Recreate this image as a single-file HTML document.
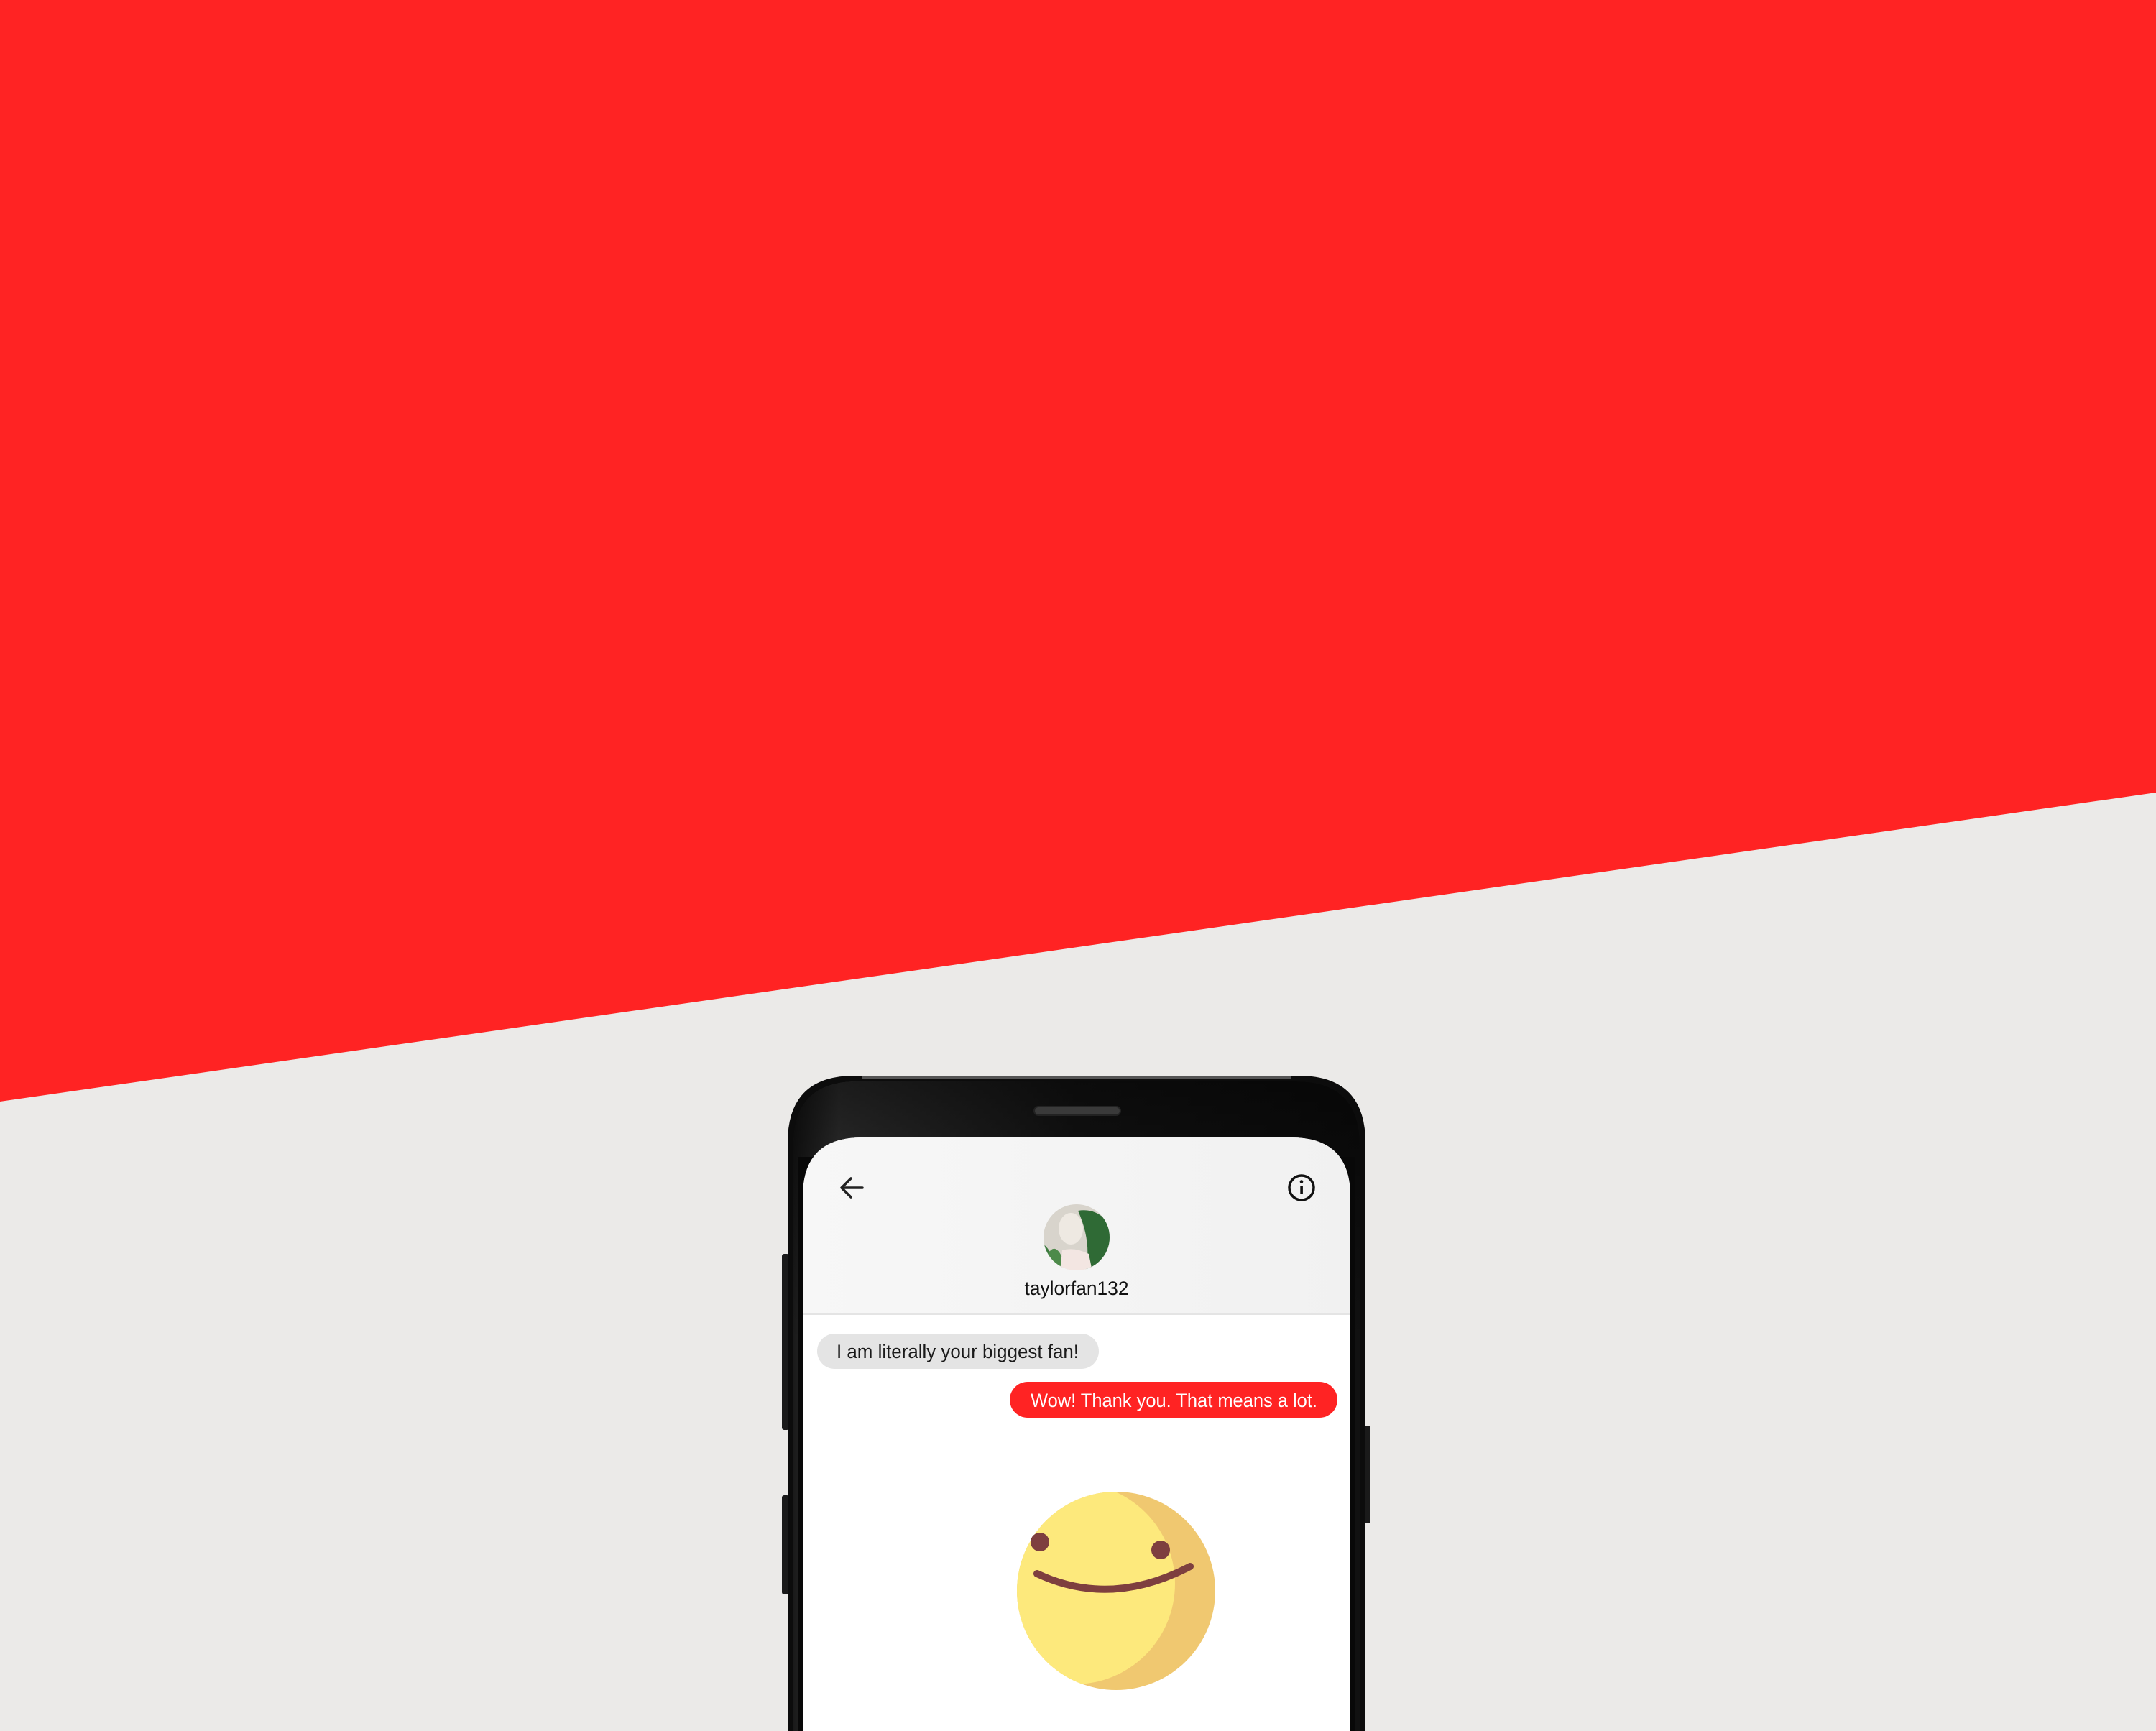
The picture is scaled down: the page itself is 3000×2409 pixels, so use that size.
<!DOCTYPE html>
<html><head><meta charset="utf-8"><style>
html,body{margin:0;padding:0;width:3000px;height:2409px;overflow:hidden;background:#ebeae8}
svg{display:block}
text{font-family:"Liberation Sans",sans-serif}
</style></head><body>
<svg width="3000" height="2409" viewBox="0 0 3000 2409" xmlns="http://www.w3.org/2000/svg">
<defs>
<linearGradient id="bez" x1="0" y1="0" x2="1" y2="0">
<stop offset="0" stop-color="#1a1a1a"/><stop offset="0.08" stop-color="#444"/><stop offset="0.5" stop-color="#1c1c1c"/><stop offset="1" stop-color="#111"/>
</linearGradient>
<linearGradient id="bezv" x1="0" y1="0" x2="0" y2="1">
<stop offset="0" stop-color="#000" stop-opacity="0.6"/><stop offset="0.4" stop-color="#000" stop-opacity="0"/>
</linearGradient>
<linearGradient id="hdr" x1="0" y1="0" x2="1" y2="0">
<stop offset="0" stop-color="#f7f7f7"/><stop offset="1" stop-color="#f1f1f1"/>
</linearGradient>
<clipPath id="face"><circle cx="1553" cy="2214" r="138"/></clipPath>
<clipPath id="av"><circle cx="1498" cy="1722" r="46"/></clipPath>
<clipPath id="scr"><path d="M1117 2409 V1665 Q1117 1583 1199 1583 H1797 Q1879 1583 1879 1665 V2409 Z"/></clipPath>
</defs>
<rect width="3000" height="2409" fill="#ebeae8"/>
<polygon points="0,0 3000,0 3000,1103 0,1533" fill="#ff2323"/>
<rect x="1088" y="1745" width="10" height="245" rx="3" fill="#1a1a1a"/>
<rect x="1088" y="2081" width="10" height="138" rx="3" fill="#1a1a1a"/>
<rect x="1898" y="1984" width="9" height="136" rx="3" fill="#1a1a1a"/>
<path d="M1096 2409 V1590 Q1096 1497 1189 1497 H1807 Q1900 1497 1900 1590 V2409 Z" fill="#0c0c0c"/>
<path d="M1104 2409 V1594 Q1104 1505 1193 1505 H1803 Q1892 1505 1892 1594 V2409 Z" fill="url(#bez)"/>
<path d="M1104 2409 V1594 Q1104 1505 1193 1505 H1803 Q1892 1505 1892 1594 V2409 Z" fill="url(#bezv)"/>
<rect x="1110" y="1610" width="776" height="799" fill="#080808"/>
<rect x="1200" y="1497" width="596" height="5" fill="#555"/>
<rect x="1439" y="1540" width="120" height="12" rx="6" fill="#3a3a3a" stroke="#222" stroke-width="2"/>
<g clip-path="url(#scr)">
<rect x="1117" y="1583" width="762" height="826" fill="#fff"/>
<rect x="1117" y="1583" width="762" height="245" fill="url(#hdr)"/>
<rect x="1117" y="1827" width="762" height="3" fill="#e4e4e4"/>
</g>
<path d="M1200 1653 H1172 M1184 1640 L1171 1653 L1184 1666" fill="none" stroke="#222" stroke-width="3.5" stroke-linecap="round" stroke-linejoin="round"/>
<circle cx="1811" cy="1653" r="17" fill="none" stroke="#111" stroke-width="3.5"/>
<rect x="1809.3" y="1650" width="3.6" height="12" fill="#111"/>
<circle cx="1811" cy="1644.5" r="2.3" fill="#111"/>
<g clip-path="url(#av)">
<rect x="1450" y="1674" width="96" height="96" fill="#d8d4cc"/>
<path d="M1500 1685 Q1530 1680 1548 1710 L1548 1770 L1510 1770 Q1520 1730 1500 1685Z" fill="#2f6a35"/>
<path d="M1450 1730 Q1465 1740 1470 1770 L1450 1770Z" fill="#3c7a3e"/>
<path d="M1458 1745 Q1470 1725 1482 1760 L1470 1770 L1455 1770Z" fill="#4d8a4a"/>
<ellipse cx="1490" cy="1710" rx="17" ry="22" fill="#eee9e2"/>
<path d="M1478 1740 Q1495 1735 1515 1745 L1520 1770 L1475 1770Z" fill="#f3e6e2"/>
</g>
<text x="1498" y="1802" text-anchor="middle" font-size="27" fill="#111" textLength="145" lengthAdjust="spacingAndGlyphs">taylorfan132</text>
<rect x="1137" y="1856" width="392" height="49" rx="24.5" fill="#e4e4e4"/>
<text x="1164" y="1890" font-size="27" fill="#1a1a1a" textLength="337" lengthAdjust="spacingAndGlyphs">I am literally your biggest fan!</text>
<rect x="1405" y="1923" width="456" height="50" rx="25" fill="#ff2323"/>
<text x="1434" y="1958" font-size="27" fill="#fff" textLength="399" lengthAdjust="spacingAndGlyphs">Wow! Thank you. That means a lot.</text>
<circle cx="1553" cy="2214" r="138" fill="#f0c870"/>
<g clip-path="url(#face)"><circle cx="1495" cy="2204" r="140" fill="#fde97c"/></g>
<circle cx="1447" cy="2146" r="13" fill="#7e3f3f"/>
<circle cx="1615" cy="2157" r="13" fill="#7e3f3f"/>
<path d="M1443 2190 Q1545 2238 1656 2180" fill="none" stroke="#7e3f3f" stroke-width="10" stroke-linecap="round"/>
</svg>
</body></html>
